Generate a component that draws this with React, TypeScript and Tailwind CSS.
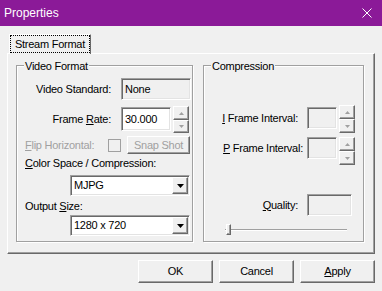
import React from "react";

const sunken =
  "border border-t-[#a0a0a0] border-l-[#a0a0a0] border-r-white border-b-white shadow-[inset_1px_1px_0_#696969,inset_-1px_-1px_0_#e3e3e3]";
const raised =
  "border border-t-white border-l-white border-r-[#696969] border-b-[#696969] shadow-[inset_-1px_-1px_0_#a0a0a0]";
const etched = "border border-[#a0a0a0] shadow-[inset_1px_1px_0_#fff,1px_1px_0_#fff]";

function Spinner({ downH }: { downH: string }) {
  return (
    <div className="ml-[2px] flex flex-col w-[16px]">
      <div className={`${raised} h-[14px] bg-[#f0f0f0] flex items-center justify-center`}>
        <svg width="5" height="3" viewBox="0 0 5 3">
          <polygon points="0,3 2.5,0 5,3" fill="#a0a0a0" />
        </svg>
      </div>
      <div className={`${raised} ${downH} bg-[#f0f0f0] flex items-center justify-center`}>
        <svg width="5" height="3" viewBox="0 0 5 3">
          <polygon points="0,0 5,0 2.5,3" fill="#a0a0a0" />
        </svg>
      </div>
    </div>
  );
}

function Combo({ value }: { value: string }) {
  return (
    <div className={`${sunken} w-[120px] h-[21px] bg-white flex items-center justify-between pl-[3px] pr-[1px]`}>
      <span>{value}</span>
      <div className={`${raised} w-[16px] h-[17px] bg-[#f0f0f0] flex items-center justify-center`}>
        <svg width="7" height="4" viewBox="0 0 7 4">
          <polygon points="0,0 7,0 3.5,4" fill="#000" />
        </svg>
      </div>
    </div>
  );
}

export default function App() {
  return (
    <div className="w-[382px] h-[291px] bg-[#f0f0f0] flex flex-col overflow-hidden font-['Liberation_Sans',Arial,sans-serif] text-[11px] tracking-[-0.25px] leading-[13px] text-black">
      <div className="h-[26px] shrink-0 bg-[#8b1a98] flex items-center justify-between pl-[4px] pr-[10px] text-white text-[12px] tracking-normal">
        <span>Properties</span>
        <svg width="10" height="10" viewBox="0 0 10 10">
          <path d="M0.5 0.5L9.5 9.5M9.5 0.5L0.5 9.5" stroke="#fff" strokeWidth="1" />
        </svg>
      </div>

      <div className="flex flex-col pl-[7px] pt-[8px]">
        <div className="relative z-10 -mb-px ml-[2px] w-[82px] h-[20px] border-l border-t border-r border-l-white border-t-white border-r-[#696969] bg-[#f0f0f0] pb-px">
          <div className="h-[18px] border border-dotted border-black flex items-center justify-center">
            Stream Format
          </div>
        </div>

        <div className="w-[368px] h-[201px] border border-t-white border-l-white border-r-[#696969] border-b-[#696969] shadow-[inset_-1px_-1px_0_#a0a0a0] flex pl-[8px] pt-[11px] gap-[10px]">
          {/* Video Format */}
          <div className={`${etched} w-[177px] h-[177px] flex flex-col`}>
            <div className="-mt-[6px] ml-[7px] px-[1px] bg-[#f0f0f0] w-fit">Video Format</div>

            <div className="mt-[5px] flex items-center h-[22px]">
              <div className="w-[94px] text-right">Video Standard:</div>
              <div className={`${sunken} ml-[10px] w-[70px] h-[22px] flex items-center pl-[3px]`}>None</div>
            </div>

            <div className="mt-[6px] flex items-start">
              <div className="w-[94px] h-[26px] flex items-center justify-end">
                <span>
                  Frame <u>R</u>ate:
                </span>
              </div>
              <div className={`${sunken} ml-[10px] mt-[1px] w-[50px] h-[24px] bg-white flex items-center pl-[3px]`}>
                30.000
              </div>
              <Spinner downH="h-[13px]" />
            </div>

            <div className="mt-[3px] flex items-center h-[18px]">
              <div className="w-[91px] pl-[8px] text-[#a0a0a0]">
                <u>F</u>lip Horizontal:
              </div>
              <div className="w-[13px] h-[13px] border border-[#a0a0a0] bg-[#f0f0f0]" />
              <div className={`${raised} ml-[6px] w-[63px] h-[18px] flex items-center justify-center text-[#a0a0a0]`}>
                Snap Shot
              </div>
            </div>

            <div className="mt-[3px] pl-[8px]">
              <u>C</u>olor Space / Compression:
            </div>
            <div className="mt-[5px] ml-[53px]">
              <Combo value="MJPG" />
            </div>

            <div className="mt-[4px] pl-[8px]">
              Output <u>S</u>ize:
            </div>
            <div className="mt-[2px] ml-[53px]">
              <Combo value="1280 x 720" />
            </div>
          </div>

          {/* Compression */}
          <div className={`${etched} w-[161px] h-[177px] flex flex-col`}>
            <div className="-mt-[6px] ml-[7px] px-[1px] bg-[#f0f0f0] w-fit">Compression</div>

            <div className="mt-[32px] flex items-start">
              <div className="w-[103px] mt-[2px] h-[22px] flex items-center justify-end pr-[9px]">
                <span>
                  <u>I</u> Frame Interval:
                </span>
              </div>
              <div className={`${sunken} mt-[2px] w-[30px] h-[22px]`} />
              <Spinner downH="h-[14px]" />
            </div>

            <div className="mt-[4px] flex items-start">
              <div className="w-[103px] h-[22px] flex items-center justify-end pr-[4px]">
                <span>
                  <u>P</u> Frame Interval:
                </span>
              </div>
              <div className={`${sunken} w-[30px] h-[22px]`} />
              <Spinner downH="h-[14px]" />
            </div>

            <div className="mt-[29px] flex items-center">
              <div className="w-[103px] text-right pr-[9px]">
                <u>Q</u>uality:
              </div>
              <div className={`${sunken} w-[45px] h-[22px]`} />
            </div>

            <div className="relative mt-[8px] ml-[21px] w-[122px] h-[11px] flex items-center">
              <div className="w-full h-[2px] border-t border-t-[#a0a0a0] border-b border-b-white" />
              <div className={`${raised} absolute left-[1px] top-0 w-[5px] h-[11px] bg-[#f0f0f0]`} />
            </div>
          </div>
        </div>
      </div>

      <div className="mt-[6px] flex justify-end gap-[6px] pr-[7px]">
        <div className={`${raised} w-[75px] h-[23px] flex items-center justify-center`}>OK</div>
        <div className={`${raised} w-[75px] h-[23px] flex items-center justify-center`}>Cancel</div>
        <div className={`${raised} w-[75px] h-[23px] flex items-center justify-center`}>
          <span>
            <u>A</u>pply
          </span>
        </div>
      </div>
    </div>
  );
}
